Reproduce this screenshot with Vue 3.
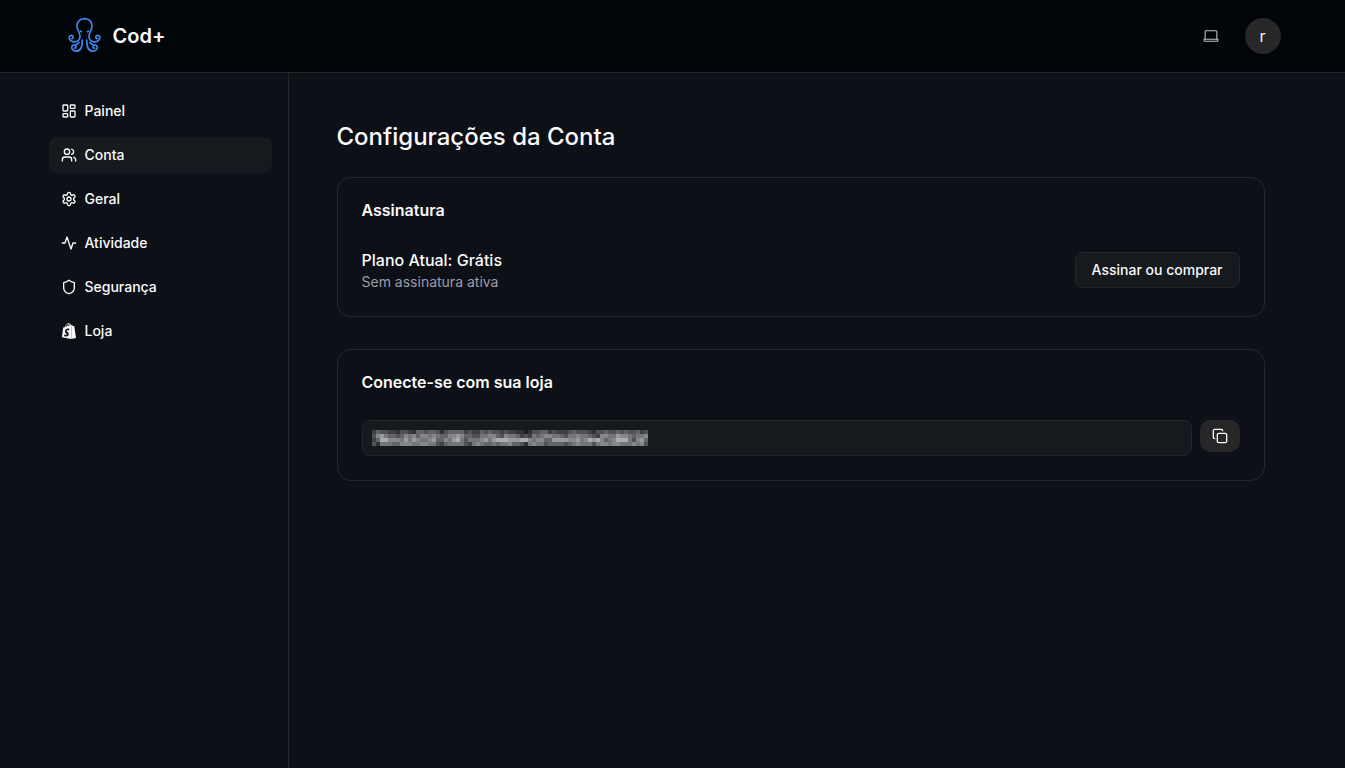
<script setup>
import { computed, ref } from 'vue';

const active = ref('Conta');

const menuItems = [
  {
    label: 'Painel',
    path: 'M4 3h5a1 1 0 0 1 1 1v7a1 1 0 0 1-1 1H4a1 1 0 0 1-1-1V4a1 1 0 0 1 1-1ZM15 3h5a1 1 0 0 1 1 1v3a1 1 0 0 1-1 1h-5a1 1 0 0 1-1-1V4a1 1 0 0 1 1-1ZM15 12h5a1 1 0 0 1 1 1v7a1 1 0 0 1-1 1h-5a1 1 0 0 1-1-1v-7a1 1 0 0 1 1-1ZM4 16h5a1 1 0 0 1 1 1v3a1 1 0 0 1-1 1H4a1 1 0 0 1-1-1v-3a1 1 0 0 1 1-1Z'
  },
  {
    label: 'Conta',
    path: 'M16 21v-2a4 4 0 0 0-4-4H6a4 4 0 0 0-4 4v2M5 7a4 4 0 1 0 8 0a4 4 0 1 0-8 0M22 21v-2a4 4 0 0 0-3-3.87M16 3.13a4 4 0 0 1 0 7.75'
  },
  {
    label: 'Geral',
    path: 'M12.22 2h-.44a2 2 0 0 0-2 2v.18a2 2 0 0 1-1 1.73l-.43.25a2 2 0 0 1-2 0l-.15-.08a2 2 0 0 0-2.73.73l-.22.38a2 2 0 0 0 .73 2.73l.15.1a2 2 0 0 1 1 1.72v.51a2 2 0 0 1-1 1.74l-.15.09a2 2 0 0 0-.73 2.73l.22.38a2 2 0 0 0 2.73.73l.15-.08a2 2 0 0 1 2 0l.43.25a2 2 0 0 1 1 1.73V20a2 2 0 0 0 2 2h.44a2 2 0 0 0 2-2v-.18a2 2 0 0 1 1-1.73l.43-.25a2 2 0 0 1 2 0l.15.08a2 2 0 0 0 2.73-.73l.22-.39a2 2 0 0 0-.73-2.73l-.15-.08a2 2 0 0 1-1-1.74v-.5a2 2 0 0 1 1-1.74l.15-.09a2 2 0 0 0 .73-2.73l-.22-.38a2 2 0 0 0-2.73-.73l-.15.08a2 2 0 0 1-2 0l-.43-.25a2 2 0 0 1-1-1.73V4a2 2 0 0 0-2-2zM9 12a3 3 0 1 0 6 0a3 3 0 1 0-6 0'
  },
  { label: 'Atividade', path: 'M22 12h-4l-3 9L9 3l-3 9H2' },
  {
    label: 'Segurança',
    path: 'M20 13c0 5-3.5 7.5-7.66 8.95a1 1 0 0 1-.67-.01C7.5 20.5 4 18 4 13V6a1 1 0 0 1 1-1c2 0 4.5-1.2 6.24-2.72a1.17 1.17 0 0 1 1.52 0C14.51 3.81 17 5 19 5a1 1 0 0 1 1 1z'
  },
  {
    label: 'Loja',
    filled: true,
    path: 'M15.337 23.979l7.216-1.561s-2.604-17.613-2.625-17.73c-.018-.116-.114-.192-.211-.192s-1.929-.136-1.929-.136-1.275-1.274-1.439-1.411c-.045-.037-.075-.057-.121-.074l-.914 21.104h.023zM11.71 11.305s-.81-.424-1.774-.424c-1.447 0-1.504.906-1.504 1.141 0 1.232 3.24 1.715 3.24 4.629 0 2.295-1.44 3.76-3.406 3.76-2.354 0-3.54-1.465-3.54-1.465l.646-2.086s1.245 1.066 2.28 1.066c.675 0 .975-.545.975-.932 0-1.619-2.654-1.694-2.654-4.359-.034-2.237 1.571-4.416 4.827-4.416 1.257 0 1.875.361 1.875.361l-.945 2.715-.02.01zM11.17.83c.136 0 .271.038.405.135-.984.465-2.064 1.639-2.508 3.992-.656.213-1.293.405-1.889.578C7.697 3.75 8.951.84 11.17.84V.83zm1.235 2.949v.135c-.754.232-1.583.484-2.394.736.466-1.777 1.333-2.645 2.085-2.971.193.501.309 1.176.309 2.1zm.539-2.234c.694.074 1.141.867 1.429 1.755-.349.114-.735.231-1.158.366v-.252c0-.752-.096-1.371-.271-1.871v.002zm2.992 1.289c-.02 0-.06.021-.078.021s-.289.075-.714.21c-.423-1.233-1.176-2.37-2.508-2.37h-.115C12.135.209 11.669 0 11.265 0 8.159 0 6.675 3.877 6.21 5.846c-1.194.365-2.063.636-2.16.674-.675.213-.694.232-.772.87-.075.462-1.83 14.063-1.83 14.063L15.009 24l.927-21.166z'
  }
];

// mosaico que oculta a chave: um dígito de brilho por célula
const maskRows = [
  '243322133214434431344442322434332322110133442322234333213343343433423',
  '367544346564665654466764433556643655423254566554355655432665576654556',
  '248866657576556744657853555675788877788656644777766756878645688853674',
  '315554466655665532455553256544545564431565534444345655535665665556563'
];
const maskColors = ['#191c20', '#303236', '#3e4044', '#505256', '#626467', '#747679', '#868789', '#989a9c', '#aaabad'];
const maskCells = computed(() =>
  maskRows.flatMap((row, y) => [...row].map((level, x) => ({ x: x * 4, y: y * 4, fill: maskColors[level] })))
);
</script>

<template>
  <div class="layout">
    <header class="header">
      <div class="container header-inner">
        <a href="#" class="brand">
          <svg class="brand-logo" viewBox="0.5 0 40 40" aria-hidden="true">
            <g id="tentacles">
              <path d="M20 2.6C15 2.6 12.300 6.200 12.500 10.500C12.700 14 15.500 16.500 15.500 20.500C15.500 24 12.800 26 9.500 25.800C5.500 25.500 4 22.300 4.900 20.500C5.800 18.900 8.300 19.100 8.700 20.900C8.900 22 8.100 22.700 7.200 22.500" />
              <path d="M17.800 24C18 31 16 35.300 11.500 35.200C8.300 35.100 6.500 32.500 7.400 30.300C8.300 28.600 11.300 28.700 11.600 30.700C11.700 31.700 10.900 32.300 10 32.100" />
              <path d="M14.500 26.500C13.900 27.500 13 28 11.500 28.700" />
              <path d="M16 15.300l1 .3" />
            </g>
            <use href="#tentacles" transform="translate(40 0) scale(-1 1)" />
          </svg>
          <span>Cod+</span>
        </a>
        <div class="header-actions">
          <button class="theme-btn" aria-label="Tema">
            <svg viewBox="0 0 15 15" aria-hidden="true">
              <path d="M2 10V3.5a1 1 0 0 1 1-1h9a1 1 0 0 1 1 1V10M1 10.5h13v1a1 1 0 0 1-1 1H2a1 1 0 0 1-1-1z" />
            </svg>
          </button>
          <button class="avatar" aria-label="Perfil">r</button>
        </div>
      </div>
    </header>

    <div class="container body">
      <aside class="sidebar">
        <nav class="menu-list">
          <a
            v-for="item in menuItems"
            :key="item.label"
            href="#"
            :class="['menu-item', { active: active === item.label }]"
            @click.prevent="active = item.label"
          >
            <svg :class="['icon', { filled: item.filled }]" viewBox="0 0 24 24" aria-hidden="true">
              <path :d="item.path" />
            </svg>
            <span>{{ item.label }}</span>
          </a>
        </nav>
      </aside>

      <main class="content">
        <h1>Configurações da Conta</h1>

        <section class="card">
          <h2>Assinatura</h2>
          <div class="plan">
            <div>
              <p class="plan-name">Plano Atual: Grátis</p>
              <p class="plan-status">Sem assinatura ativa</p>
            </div>
            <button class="plan-btn">Assinar ou comprar</button>
          </div>
        </section>

        <section class="card">
          <h2><label for="store-key">Conecte-se com sua loja</label></h2>
          <div class="key-row">
            <div class="key-field">
              <input id="store-key" type="text" readonly />
              <svg class="key-mask" viewBox="0 0 276 16" shape-rendering="crispEdges" aria-hidden="true">
                <rect v-for="(cell, i) in maskCells" :key="i" :x="cell.x" :y="cell.y" width="4" height="4" :fill="cell.fill" />
              </svg>
            </div>
            <button class="copy-btn" aria-label="Copiar">
              <svg class="icon" viewBox="0 0 24 24" aria-hidden="true">
                <rect x="8" y="8" width="14" height="14" rx="2" />
                <path d="M4 16c-1.1 0-2-.9-2-2V4c0-1.1.9-2 2-2h10c1.1 0 2 .9 2 2" />
              </svg>
            </button>
          </div>
        </section>
      </main>
    </div>
  </div>
</template>

<style>
body {
  background: #0d1017;
}
</style>

<style scoped>
.layout {
  display: flex;
  flex-direction: column;
  min-height: 100vh;
  background: #0d1017;
  color: #fafafa;
  font-family: Inter, "Liberation Sans", sans-serif;
  font-size: 14px;
  line-height: 20px;
}
.layout *,
.layout {
  box-sizing: border-box;
}
button,
input {
  font: inherit;
  color: inherit;
}
button {
  cursor: pointer;
}
h1,
h2,
p {
  margin: 0;
}
.container {
  width: 100%;
  max-width: 1280px;
  margin: 0 auto;
}
.header {
  background: #010409;
  border-bottom: 1px solid #27272a;
}
.header-inner {
  display: flex;
  align-items: center;
  justify-content: space-between;
  height: 72px;
  padding: 0 32px;
}
.brand {
  display: flex;
  align-items: center;
  gap: 8px;
  color: inherit;
  text-decoration: none;
  font-size: 20px;
  line-height: 28px;
  font-weight: 600;
}
.brand-logo {
  width: 40px;
  height: 40px;
  fill: none;
  stroke: #3f87ea;
  stroke-width: 1.7;
  stroke-linecap: round;
}
.header-actions {
  display: flex;
  align-items: center;
  gap: 16px;
}
.theme-btn {
  display: flex;
  align-items: center;
  justify-content: center;
  width: 36px;
  height: 36px;
  padding: 0;
  border: none;
  background: none;
}
.theme-btn svg {
  width: 16px;
  height: 16px;
  fill: none;
  stroke: #c4c4c6;
}
.avatar {
  width: 36px;
  height: 36px;
  padding: 0;
  border: none;
  border-radius: 50%;
  background: #27272a;
  font-size: 16px;
}
.body {
  display: flex;
  flex: 1;
}
.sidebar {
  flex: none;
  width: 256px;
  padding: 20px 16px;
  border-right: 1px solid #27272a;
}
.menu-list {
  display: flex;
  flex-direction: column;
  gap: 8px;
}
.menu-item {
  display: flex;
  align-items: center;
  gap: 8px;
  height: 36px;
  padding: 0 12px;
  border-radius: 8px;
  color: inherit;
  text-decoration: none;
  font-weight: 500;
}
.menu-item.active,
.menu-item:hover {
  background: #16191d;
}
.icon {
  width: 16px;
  height: 16px;
  fill: none;
  stroke: currentColor;
  stroke-width: 2;
  stroke-linecap: round;
  stroke-linejoin: round;
}
.icon.filled {
  fill: currentColor;
  stroke: none;
}
.content {
  flex: 1;
  min-width: 0;
  padding: 48px;
}
h1 {
  margin-bottom: 24px;
  font-size: 24px;
  line-height: 32px;
  font-weight: 500;
}
.card {
  padding: 24px;
  border: 1px solid #27272a;
  border-radius: 14px;
}
.card + .card {
  margin-top: 32px;
}
h2 {
  margin-bottom: 30px;
  font-size: 16px;
  line-height: 16px;
  font-weight: 600;
}
.plan {
  display: flex;
  align-items: center;
  justify-content: space-between;
}
.plan-name {
  font-size: 16px;
  line-height: 24px;
  font-weight: 500;
}
.plan-status {
  color: #9c9ca8;
}
.plan-btn {
  height: 36px;
  padding: 0 16px;
  border: 1px solid #27272a;
  border-radius: 8px;
  background: #16191d;
  font-weight: 500;
}
.key-row {
  display: flex;
  align-items: flex-start;
  gap: 8px;
}
.key-field {
  position: relative;
  flex: 1;
}
.key-field input {
  display: block;
  width: 100%;
  height: 36px;
  padding: 0 12px;
  border: 1px solid #27272a;
  border-radius: 8px;
  background: #16191d;
}
.key-mask {
  position: absolute;
  top: 10px;
  left: 10px;
  width: 276px;
  height: 16px;
  pointer-events: none;
}
.copy-btn {
  display: flex;
  align-items: center;
  justify-content: center;
  width: 40px;
  height: 32px;
  padding: 0;
  border: none;
  border-radius: 10px;
  background: #27272a;
}
</style>
